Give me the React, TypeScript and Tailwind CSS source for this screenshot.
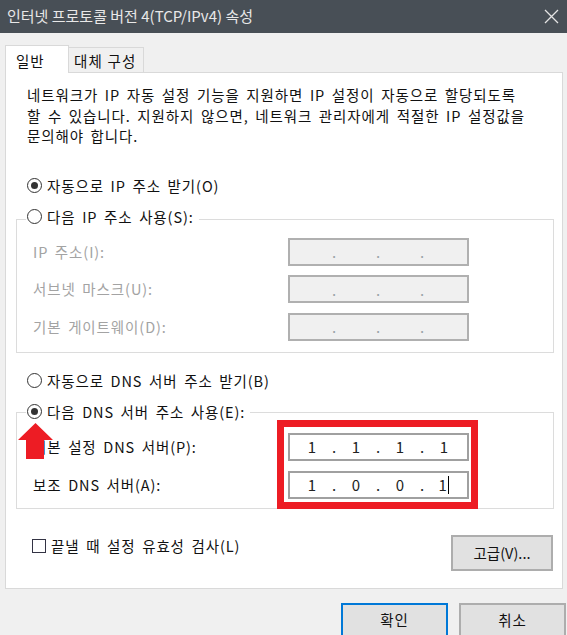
import React, { Fragment } from "react";

function Radio({ checked }: { checked?: boolean }) {
  return (
    <span className="w-[15px] h-[15px] rounded-full border-[1.5px] border-[#333333] bg-white flex items-center justify-center shrink-0">
      {checked && <span className="w-[7px] h-[7px] rounded-full bg-[#333333]" />}
    </span>
  );
}

function IpField({ values, disabled, cursor }: { values?: string[]; disabled?: boolean; cursor?: boolean }) {
  return (
    <div
      className={
        disabled
          ? "w-[181px] h-[28px] border-2 border-[#b0b0b0] bg-[#f0f0f0] flex items-center pl-[2px] text-[#9aa4a8] tracking-normal"
          : "w-[181px] h-[28px] border-2 border-[#a0a0a0] bg-white flex items-center pl-[2px] text-[#222222] tracking-normal"
      }
    >
      {[0, 1, 2, 3].map((i) => (
        <Fragment key={i}>
          {i > 0 && <span className="w-[4px] text-center text-[15px] leading-none">.</span>}
          <span className="w-[40px] text-center text-[15px] leading-none flex items-center justify-center">
            {values ? values[i] : ""}
            {cursor && i === 3 && <span className="ml-[1px] w-[1.5px] h-[18px] bg-black inline-block" />}
          </span>
        </Fragment>
      ))}
    </div>
  );
}

function Btn({ label, primary, w }: { label: string; primary?: boolean; w: string }) {
  return (
    <div
      className={
        primary
          ? "h-[34px] border-2 border-[#0078d7] bg-[#e1e1e1] flex items-center justify-center text-[14.5px] text-[#111111] " + w
          : "h-[34px] border-2 border-[#adadad] bg-[#e1e1e1] flex items-center justify-center text-[14.5px] text-[#111111] " + w
      }
    >
      {label}
    </div>
  );
}

export default function App() {
  return (
    <div className="relative w-[567px] h-[635px] overflow-hidden bg-[#f0f0f0] font-['Noto_Sans_CJK_KR','Noto_Sans',sans-serif] text-[#111111] flex flex-col">
      {/* Title bar */}
      <div className="h-[33px] shrink-0 bg-[#484f56] flex items-center justify-between pl-[7px] pr-[6px]">
        <span className="text-[15px] text-[#e8e8e8]">인터넷 프로토콜 버전 4(TCP/IPv4) 속성</span>
        <svg width="15" height="15" viewBox="0 0 15 15" className="mr-[2px]">
          <path d="M1 1 L14 14 M14 1 L1 14" stroke="#e4e4e4" strokeWidth="1.3" />
        </svg>
      </div>

      {/* Tabs */}
      <div className="h-[39px] shrink-0 flex items-end pl-[5px]">
        <div className="relative z-10 -mb-px h-[28px] w-[64px] bg-white border border-b-0 border-[#d9d9d9] flex items-start pt-[4px] pl-[10px] text-[14.5px] tracking-[1px]">
          일반
        </div>
        <div className="h-[25px] w-[75px] bg-[#f0f0f0] border border-l-0 border-b-0 border-[#d9d9d9] flex items-start pt-[2px] pl-[5px] text-[14.5px] tracking-[1.2px]">
          대체 구성
        </div>
      </div>

      {/* Panel */}
      <div className="ml-[5px] w-[558px] h-[517px] shrink-0 bg-white border border-[#d9d9d9] flex flex-col text-[14.5px] tracking-[0.9px] [word-spacing:2.5px]">
        <p className="ml-[21px] mt-[12px] leading-[20.5px] whitespace-nowrap">
          네트워크가 IP 자동 설정 기능을 지원하면 IP 설정이 자동으로 할당되도록
          <br />
          할 수 있습니다. 지원하지 않으면, 네트워크 관리자에게 적절한 IP 설정값을
          <br />
          문의해야 합니다.
        </p>

        <div className="ml-[21px] mt-[29px] h-[20px] flex items-center gap-[5px]">
          <Radio checked />
          <span>자동으로 IP 주소 받기(O)</span>
        </div>

        <div className="mt-[11px] ml-[10px] w-[538px]">
          <div className="relative z-10 ml-[10px] w-fit bg-white pl-[1px] pr-[5px] h-[20px] flex items-center gap-[5px]">
            <Radio />
            <span>다음 IP 주소 사용(S):</span>
          </div>
          <div className="-mt-[8px] border border-[#dcdcdc] pt-[18px] pb-[11px] pl-[16px] flex flex-col gap-[9.5px]">
            {[
              "IP 주소(I):",
              "서브넷 마스크(U):",
              "기본 게이트웨이(D):",
            ].map((l) => (
              <div key={l} className="flex items-center">
                <span className="w-[255px] text-[#a3a3a3]">{l}</span>
                <IpField disabled />
              </div>
            ))}
          </div>
        </div>

        <div className="ml-[21px] mt-[18px] h-[20px] flex items-center gap-[5px]">
          <Radio />
          <span>자동으로 DNS 서버 주소 받기(B)</span>
        </div>

        <div className="mt-[11px] ml-[10px] w-[538px]">
          <div className="relative z-10 ml-[10px] w-fit bg-white pl-[1px] pr-[5px] h-[20px] flex items-center gap-[5px]">
            <Radio checked />
            <span>다음 DNS 서버 주소 사용(E):</span>
          </div>
          <div className="-mt-[10px] border border-[#dcdcdc] pt-[20px] pb-[9px] pl-[16px] flex">
            <div className="w-[255px] flex flex-col gap-[10px]">
              <div className="h-[28px] flex items-center">기본 설정 DNS 서버(P):</div>
              <div className="h-[28px] flex items-center">보조 DNS 서버(A):</div>
            </div>
            <div className="relative flex flex-col gap-[10px]">
              <IpField values={["1", "1", "1", "1"]} />
              <IpField values={["1", "0", "0", "1"]} cursor />
              <div className="absolute left-[-11px] top-[-13px] w-[201px] h-[89px] border-[7px] border-[#ed1c24] pointer-events-none" />
            </div>
          </div>
        </div>

        <div className="mt-[26px] flex items-start justify-between pl-[26px] pr-[9px]">
          <div className="mt-[1px] h-[20px] flex items-center gap-[5px]">
            <span className="w-[14px] h-[14px] border-[1.5px] border-[#333344] bg-white" />
            <span>끝낼 때 설정 유효성 검사(L)</span>
          </div>
          <Btn label="고급(V)..." w="w-[102px] !h-[36px] tracking-normal" />
        </div>
      </div>

      {/* Bottom buttons */}
      <div className="mt-[14px] flex pl-[341px] gap-[11px]">
        <Btn label="확인" primary w="w-[107px] shrink-0 tracking-[1px]" />
        <Btn label="취소" w="w-[107px] shrink-0 tracking-[1px]" />
      </div>

      {/* Red arrow annotation */}
      <svg className="absolute left-[18px] top-[423px]" width="35" height="36" viewBox="0 0 35 36">
        <path d="M17.5 0 L35 17 L26 17 L26 36 L8 36 L8 17 L0 17 Z" fill="#ed1c24" />
      </svg>
    </div>
  );
}
